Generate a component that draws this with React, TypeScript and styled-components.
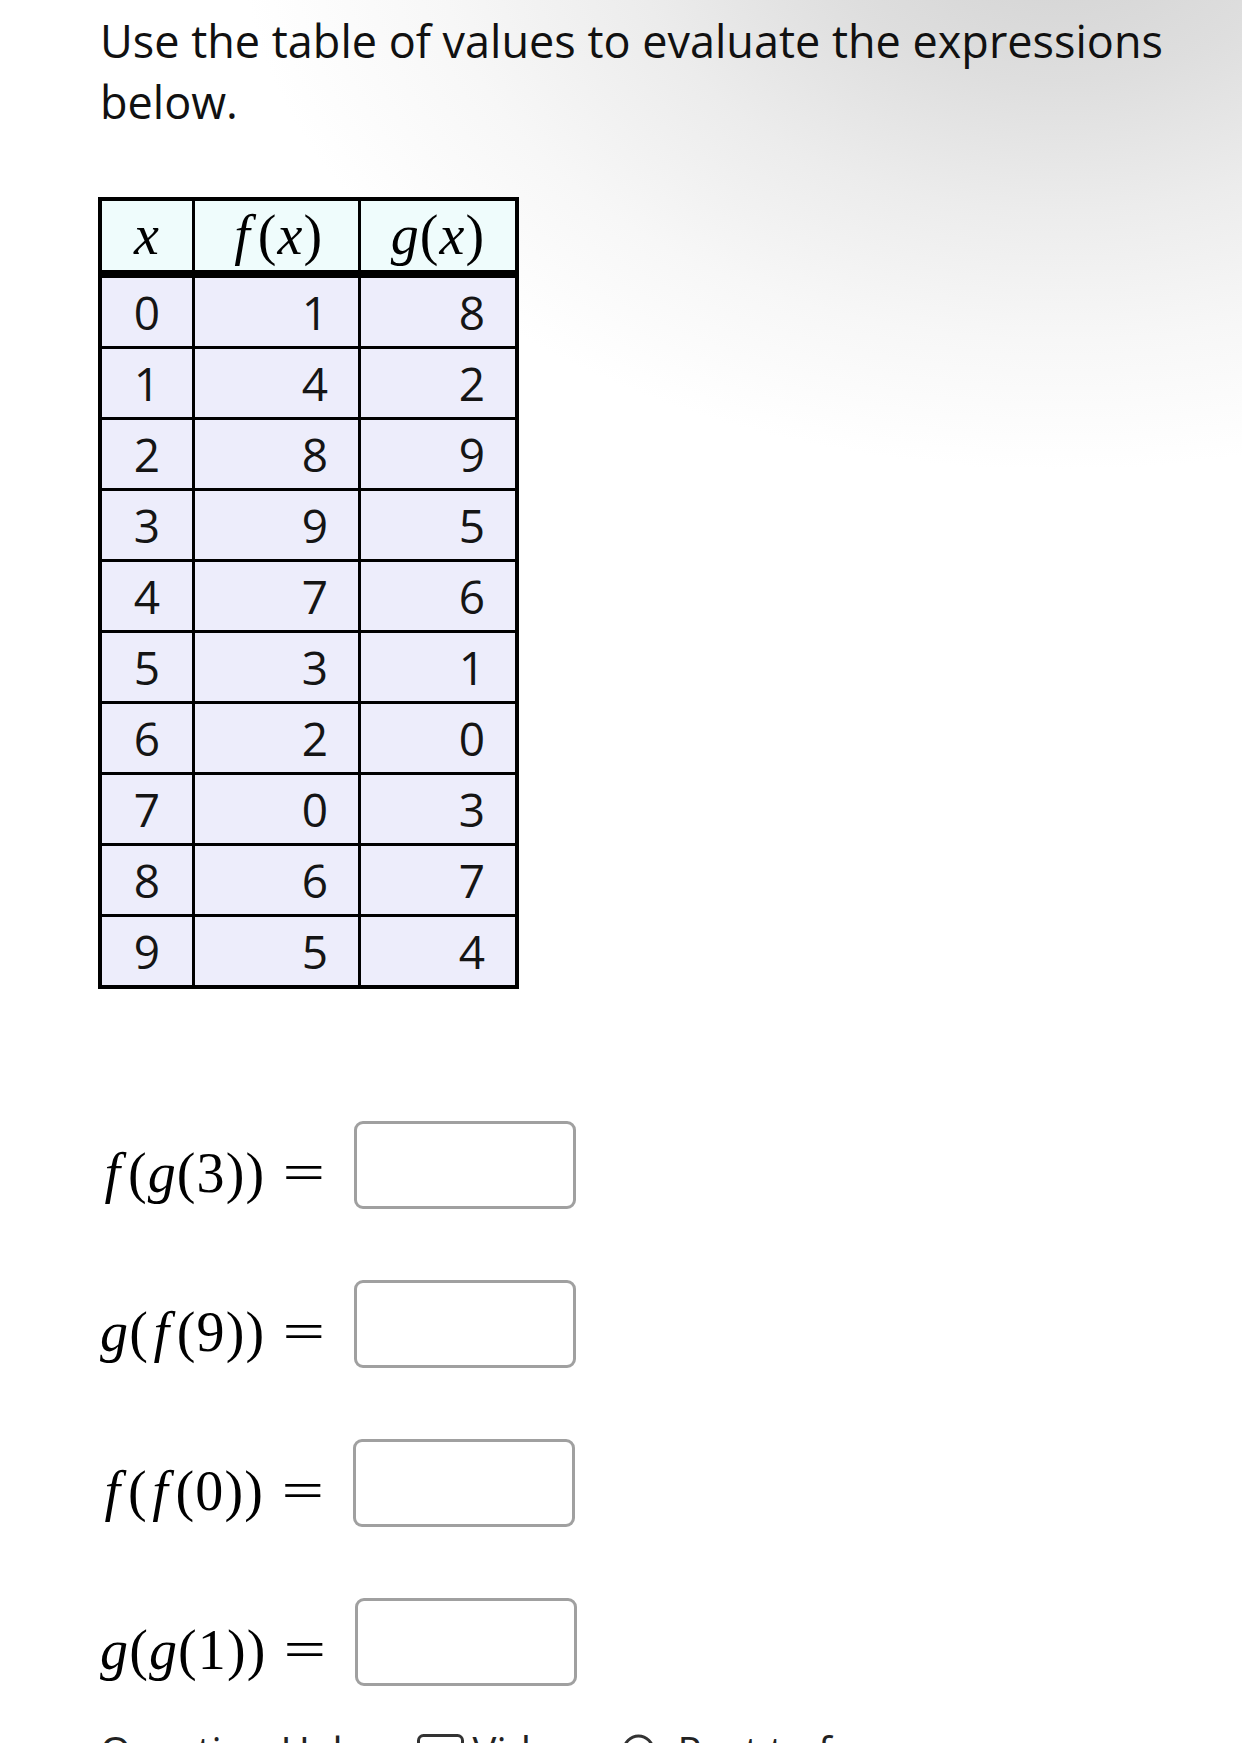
import React from "react";
import styled, { createGlobalStyle } from "styled-components";

const GlobalStyle = createGlobalStyle`
  html, body {
    margin: 0;
    padding: 0;
  }
  body {
    font-family: "Open Sans", "Noto Sans", sans-serif;
    color: #111;
    background-color: #ffffff;
    background-image: radial-gradient(
      ellipse 820px 540px at 1060px -70px,
      #d2d2d2 0%,
      #dedede 28%,
      #ececec 52%,
      #f7f7f7 76%,
      #ffffff 100%
    );
    background-repeat: no-repeat;
  }
`;

const Page = styled.main`
  padding: 10px 0 0 100px;
`;

const Title = styled.p`
  margin: 0;
  max-width: 1110px;
  font-size: 45px;
  line-height: 61px;
  font-weight: 400;
  color: #111;
`;

const ValuesTable = styled.table`
  margin-top: 65px;
  margin-left: -2px;
  border-collapse: separate;
  border-spacing: 0;
  border: 4px solid #000;
  font-size: 46px;
`;

const HeadCell = styled.th<{ $w: number; $last?: boolean }>`
  width: ${(p) => p.$w}px;
  padding: 0;
  line-height: 68px;
  background: #effcfc;
  border-bottom: 8px solid #000;
  border-right: ${(p) => (p.$last ? "0" : "3px solid #000")};
  text-align: center;
  font-weight: 400;
`;

const Cell = styled.td<{ $align: "center" | "right"; $last?: boolean; $bottom?: boolean }>`
  padding: 0 ${(p) => (p.$align === "right" ? "30px" : "0")} 0 0;
  line-height: 68px;
  background: #ededfb;
  text-align: ${(p) => p.$align};
  border-right: ${(p) => (p.$last ? "0" : "3px solid #000")};
  border-bottom: ${(p) => (p.$bottom ? "0" : "3px solid #000")};
  color: #151515;
`;

const Math = styled.span`
  font-family: "Liberation Serif", "Times New Roman", serif;
  font-size: 56px;
  letter-spacing: 0.02em;
  color: #000;
`;

const Var = styled.i<{ $f?: boolean }>`
  font-style: italic;
  margin: 0 ${(p) => (p.$f ? "0.12em" : "0")} 0 ${(p) => (p.$f ? "0.08em" : "0")};
`;

const Expressions = styled.div`
  margin-top: 132px;
  display: flex;
  flex-direction: column;
  gap: 71px;
`;

const ExprRow = styled.div`
  display: flex;
  align-items: center;
  height: 88px;
`;

const ExprText = styled(Math)`
  padding-top: 15px;
  white-space: nowrap;
`;

const Equals = styled.span`
  display: inline-block;
  font-family: "Liberation Serif", "Times New Roman", serif;
  font-size: 52px;
  width: 29px;
  text-align: center;
  transform: scaleX(1.45);
  margin: 15px 36px 0 24px;
  color: #000;
`;

const AnswerBox = styled.input`
  box-sizing: border-box;
  width: 222px;
  height: 88px;
  border: 3px solid #a0a0a0;
  border-radius: 9px;
  background: #fff;
  font-size: 40px;
  font-family: "Open Sans", sans-serif;
  padding: 0 12px;
  outline: none;
`;

const Footer = styled.div`
  margin-top: 35px;
  display: flex;
  align-items: flex-start;
  font-size: 40px;
  line-height: 60px;
  color: #222;
  white-space: nowrap;
`;

const HelpItem = styled.span<{ $ml: number }>`
  display: inline-flex;
  align-items: flex-start;
  margin-left: ${(p) => p.$ml}px;
`;

const IconWrap = styled.span<{ $gap: number }>`
  display: inline-flex;
  margin-right: ${(p) => p.$gap}px;
  margin-top: 13px;
`;

const rows = [
  [0, 1, 8],
  [1, 4, 2],
  [2, 8, 9],
  [3, 9, 5],
  [4, 7, 6],
  [5, 3, 1],
  [6, 2, 0],
  [7, 0, 3],
  [8, 6, 7],
  [9, 5, 4],
];

const exprs: [string, string, string][] = [
  ["f", "g", "3"],
  ["g", "f", "9"],
  ["f", "f", "0"],
  ["g", "g", "1"],
];

function Fn({ name }: { name: string }) {
  return <Var $f={name === "f"}>{name}</Var>;
}

export default function App() {
  return (
    <>
      <GlobalStyle />
      <Page>
        <Title>Use the table of values to evaluate the expressions below.</Title>

        <ValuesTable>
          <thead>
            <tr>
              <HeadCell $w={90}>
                <Math>
                  <Var>x</Var>
                </Math>
              </HeadCell>
              <HeadCell $w={163}>
                <Math>
                  <Fn name="f" />(<Var>x</Var>)
                </Math>
              </HeadCell>
              <HeadCell $w={154} $last>
                <Math>
                  <Fn name="g" />(<Var>x</Var>)
                </Math>
              </HeadCell>
            </tr>
          </thead>
          <tbody>
            {rows.map((r, i) => {
              const bottom = i === rows.length - 1;
              return (
                <tr key={i}>
                  <Cell $align="center" $bottom={bottom}>
                    {r[0]}
                  </Cell>
                  <Cell $align="right" $bottom={bottom}>
                    {r[1]}
                  </Cell>
                  <Cell $align="right" $bottom={bottom} $last>
                    {r[2]}
                  </Cell>
                </tr>
              );
            })}
          </tbody>
        </ValuesTable>

        <Expressions>
          {exprs.map(([a, b, n], i) => (
            <ExprRow key={i}>
              <ExprText>
                <Fn name={a} />(<Fn name={b} />({n}))
              </ExprText>
              <Equals>=</Equals>
              <AnswerBox type="text" aria-label={`${a}(${b}(${n}))`} />
            </ExprRow>
          ))}
        </Expressions>

        <Footer>
          <span>Question Help:</span>
          <HelpItem $ml={39}>
            <IconWrap $gap={9}>
              <svg width="47" height="38" viewBox="0 0 47 38" fill="none">
                <rect x="1.5" y="1.5" width="44" height="35" rx="5" stroke="#333" strokeWidth="3" />
                <path d="M19 12 L30 19 L19 26 Z" fill="#333" />
              </svg>
            </IconWrap>
            Video
          </HelpItem>
          <HelpItem $ml={44}>
            <IconWrap $gap={23}>
              <svg width="33" height="38" viewBox="0 0 33 38" fill="none">
                <circle cx="16.5" cy="16.5" r="14.5" stroke="#333" strokeWidth="3" />
              </svg>
            </IconWrap>
            Post to forum
          </HelpItem>
        </Footer>
      </Page>
    </>
  );
}
